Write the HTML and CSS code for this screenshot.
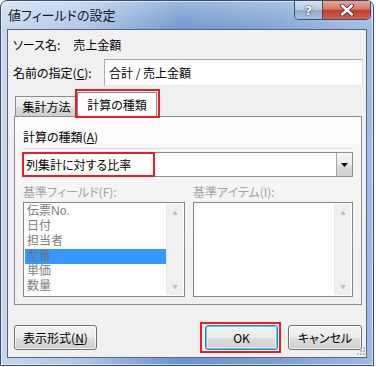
FILE: index.html
```html
<!DOCTYPE html>
<html lang="ja">
<head>
    <meta charset="UTF-8">
    <title>値フィールドの設定</title>
    <link rel="stylesheet" href="styles.css">
</head>
<body>
    <div class="window">
        <div class="titlebar">
            <span class="title">値フィールドの設定</span>
            <div class="caption-buttons">
                <div class="cap help">?</div>
                <div class="cap close">
                    <svg width="16" height="12" viewBox="0 0 16 12">
                        <path d="M3 1.5 L13 10.5 M13 1.5 L3 10.5" stroke="#4a2a28" stroke-width="4.2" stroke-linecap="round"/>
                        <path d="M3 1.5 L13 10.5 M13 1.5 L3 10.5" stroke="#ffffff" stroke-width="2.4" stroke-linecap="round"/>
                    </svg>
                </div>
            </div>
        </div>

        <div class="client">
            <div class="source-row">
                <span>ソース名:</span>
                <span class="source-name">売上金額</span>
            </div>

            <div class="name-row">
                <label class="name-label">名前の指定(<u>C</u>):</label>
                <div class="textbox">合計 / 売上金額</div>
            </div>

            <div class="tabs">
                <div class="tab-strip">
                    <div class="tab">集計方法</div>
                    <div class="tab active">計算の種類<span class="mark mark-tab"></span></div>
                </div>
                <div class="tab-panel">
                    <div class="group-label">計算の種類(<u>A</u>)</div>
                    <div class="separator"></div>
                    <div class="combo">
                        <span class="combo-text">列集計に対する比率</span>
                        <span class="combo-btn">
                            <svg width="7" height="4" viewBox="0 0 7 4"><path d="M0 0 H7 L3.5 4 Z" fill="#000"/></svg>
                        </span>
                        <span class="mark mark-combo"></span>
                    </div>

                    <div class="lists">
                        <div class="col">
                            <div class="dim-label">基準フィールド(F):</div>
                            <div class="listbox">
                                <ul class="items">
                                    <li>伝票No.</li>
                                    <li>日付</li>
                                    <li>担当者</li>
                                    <li class="selected">型番</li>
                                    <li>単価</li>
                                    <li>数量</li>
                                </ul>
                                <div class="scrollbar">
                                    <span class="arrow">▲</span>
                                    <span class="arrow">▼</span>
                                </div>
                            </div>
                        </div>
                        <div class="col">
                            <div class="dim-label">基準アイテム(I):</div>
                            <div class="listbox">
                                <ul class="items"></ul>
                                <div class="scrollbar">
                                    <span class="arrow">▲</span>
                                    <span class="arrow">▼</span>
                                </div>
                            </div>
                        </div>
                    </div>
                </div>
            </div>

            <div class="button-row">
                <button class="btn btn-format">表示形式(<u>N</u>)</button>
                <button class="btn btn-ok">OK<span class="mark mark-ok"></span></button>
                <button class="btn btn-cancel">キャンセル</button>
            </div>

            <svg class="grip" width="11" height="11" viewBox="0 0 11 11">
                <g fill="#b8b8b8">
                    <rect x="8" y="1" width="2" height="2"/>
                    <rect x="5" y="4" width="2" height="2"/>
                    <rect x="8" y="4" width="2" height="2"/>
                    <rect x="2" y="7" width="2" height="2"/>
                    <rect x="5" y="7" width="2" height="2"/>
                    <rect x="8" y="7" width="2" height="2"/>
                </g>
            </svg>
        </div>
    </div>
</body>
</html>
```

FILE: styles.css
```css
* {
    box-sizing: border-box;
}

body {
    margin: 0;
    background: #fff;
    font-family: "Noto Sans CJK JP", "Liberation Sans", sans-serif;
    font-size: 12px;
    font-feature-settings: "palt";
    color: #000;
}

u {
    text-decoration: underline;
    text-underline-offset: 1px;
}

.window {
    width: 374px;
    height: 366px;
    display: flex;
    flex-direction: column;
    padding: 0 6px 7px 6px;
    border: 1px solid #34506f;
    border-radius: 7px 7px 0 0;
    background:
        linear-gradient(180deg, rgba(255, 255, 255, 0.35) 0, rgba(255, 255, 255, 0.05) 28px, rgba(255, 255, 255, 0) 100%),
        linear-gradient(90deg, #c6d7ee 0%, #adc5e7 22%, #6b93cc 48%, #7a9ed3 72%, #9fbbe4 100%);
    box-shadow: inset 0 0 0 1px rgba(255, 255, 255, 0.55);
}

.titlebar {
    height: 28px;
    display: flex;
    align-items: flex-start;
    margin-right: -4px;
}

.title {
    padding: 6px 0 0 1px;
    font-size: 13px;
    line-height: 16px;
    color: #0f1a2a;
}

.caption-buttons {
    margin-left: auto;
    display: flex;
    height: 19px;
    border: 1px solid #3d4f69;
    border-top: none;
    border-radius: 0 0 5px 5px;
    overflow: hidden;
}

.cap {
    display: flex;
    align-items: center;
    justify-content: center;
}

.help {
    width: 28px;
    border-right: 1px solid #3d4f69;
    background: linear-gradient(180deg, #d9e3f1 0%, #b6c8e0 48%, #93abcc 52%, #a9bfdc 100%);
    color: #fff;
    font-family: "DejaVu Sans", sans-serif;
    font-weight: bold;
    font-size: 13px;
    text-shadow: 0 0 2px #2c3d55, 0 0 1px #2c3d55;
}

.close {
    width: 47px;
    background: linear-gradient(180deg, #e8a89a 0%, #d6796a 45%, #c2402f 52%, #d4604e 100%);
}

.client {
    flex: 1;
    position: relative;
    display: flex;
    flex-direction: column;
    padding: 0 3px 0 5px;
    border: 1px solid #56667c;
    background: #f0f0f0;
}

.source-row {
    margin-top: 7px;
    height: 16px;
    line-height: 16px;
    display: flex;
}

.source-name {
    margin-left: 13px;
}

.name-row {
    margin-top: 6px;
    display: flex;
    align-items: center;
    height: 27px;
}

.name-label {
    width: 91px;
    line-height: 16px;
}

.textbox {
    flex: 1;
    height: 27px;
    padding: 0 0 0 4px;
    line-height: 25px;
    background: #fff;
    border: 1px solid #abadb3;
    border-top-color: #a4a8b0;
    border-right-color: #dbdfe6;
    border-bottom-color: #e3e9ef;
}

.tabs {
    margin: 0 1px;
}

.tab-strip {
    height: 30px;
    display: flex;
    align-items: flex-end;
    padding-left: 1px;
}

.tab {
    position: relative;
    width: 63px;
    height: 20px;
    line-height: 19px;
    text-align: center;
    border: 1px solid #898c95;
    border-bottom: none;
    background: linear-gradient(180deg, #f2f2f2 0%, #ebebeb 50%, #dcdcdc 51%, #cfcfcf 100%);
}

.tab.active {
    width: 80px;
    height: 25px;
    line-height: 23px;
    margin-left: -1px;
    margin-bottom: -1px;
    z-index: 1;
    background: #fff;
}

.mark {
    position: absolute;
    border: 2px solid #ed1c24;
    pointer-events: none;
}

.mark-tab {
    top: -4px;
    left: -3px;
    right: -4px;
    bottom: -1px;
}

.tab-panel {
    height: 189px;
    padding: 0 8px 0 8px;
    border: 1px solid #898c95;
    background: linear-gradient(180deg, #ffffff 0, #f6f6f6 40px, #f0f0f0 100%);
}

.group-label {
    margin-top: 12px;
    line-height: 16px;
}

.separator {
    margin-top: 3px;
    height: 1px;
    background: #d5dfe5;
}

.combo {
    position: relative;
    margin: 3px 0 0 -1px;
    height: 25px;
    display: flex;
    align-items: center;
    padding: 0 0 0 3px;
    background: #fff;
    border: 1px solid #8e8f8f;
}

.combo-text {
    flex: 1;
    line-height: 16px;
}

.combo-btn {
    width: 16px;
    height: 23px;
    display: flex;
    align-items: center;
    justify-content: center;
    border-left: 1px solid #a5a5a5;
    background: linear-gradient(180deg, #f6f6f6 0%, #e9e9e9 50%, #dcdcdc 51%, #d2d2d2 100%);
}

.mark-combo {
    top: -1px;
    left: -1px;
    width: 133px;
    bottom: -1px;
}

.lists {
    margin-top: 7px;
    display: grid;
    grid-template-columns: 162px 1fr;
    column-gap: 8px;
}

.dim-label {
    line-height: 16px;
    color: #a3a3a3;
}

.listbox {
    margin-top: 2px;
    height: 95px;
    display: flex;
    background: #fff;
    border: 1px solid #828790;
}

.items {
    flex: 1;
    margin: 0;
    padding: 1px 0 0 1px;
    list-style: none;
}

.items li {
    height: 15px;
    line-height: 15px;
    padding-left: 2px;
    font-family: "Liberation Sans", "Noto Sans CJK JP", sans-serif;
    color: #7d7d7d;
}

.items li.selected {
    background: #3399ff;
    color: #6d7280;
}

.scrollbar {
    width: 17px;
    margin: 1px 1px 1px 0;
    display: flex;
    flex-direction: column;
    justify-content: space-between;
    align-items: center;
    background: #f0f0f0;
    border-left: 1px solid #e6e6e6;
}

.arrow {
    font-family: "DejaVu Sans", sans-serif;
    font-size: 6px;
    line-height: 16px;
    color: #bfbfbf;
}

.button-row {
    margin-top: 20px;
    display: flex;
    padding: 0 1px;
}

.btn {
    position: relative;
    height: 25px;
    padding: 0;
    font-family: inherit;
    font-size: 12px;
    font-feature-settings: "palt";
    color: #000;
    border: 1px solid #707070;
    border-radius: 3px;
    background: linear-gradient(180deg, #f2f2f2 0%, #ebebeb 50%, #dddddd 51%, #cfcfcf 100%);
    box-shadow: inset 0 0 0 1px rgba(255, 255, 255, 0.7);
}

.btn-format {
    width: 83px;
}

.btn-ok {
    width: 73px;
    margin-left: auto;
    border-color: #3c7fb1;
    box-shadow: inset 0 0 0 1px #48d0f9, inset 0 0 0 2px rgba(255, 255, 255, 0.5);
}

.mark-ok {
    top: -4px;
    left: -6px;
    right: -4px;
    bottom: -4px;
}

.btn-cancel {
    width: 74px;
    margin-left: 10px;
}

.grip {
    position: absolute;
    right: 0;
    bottom: 0;
}
```
